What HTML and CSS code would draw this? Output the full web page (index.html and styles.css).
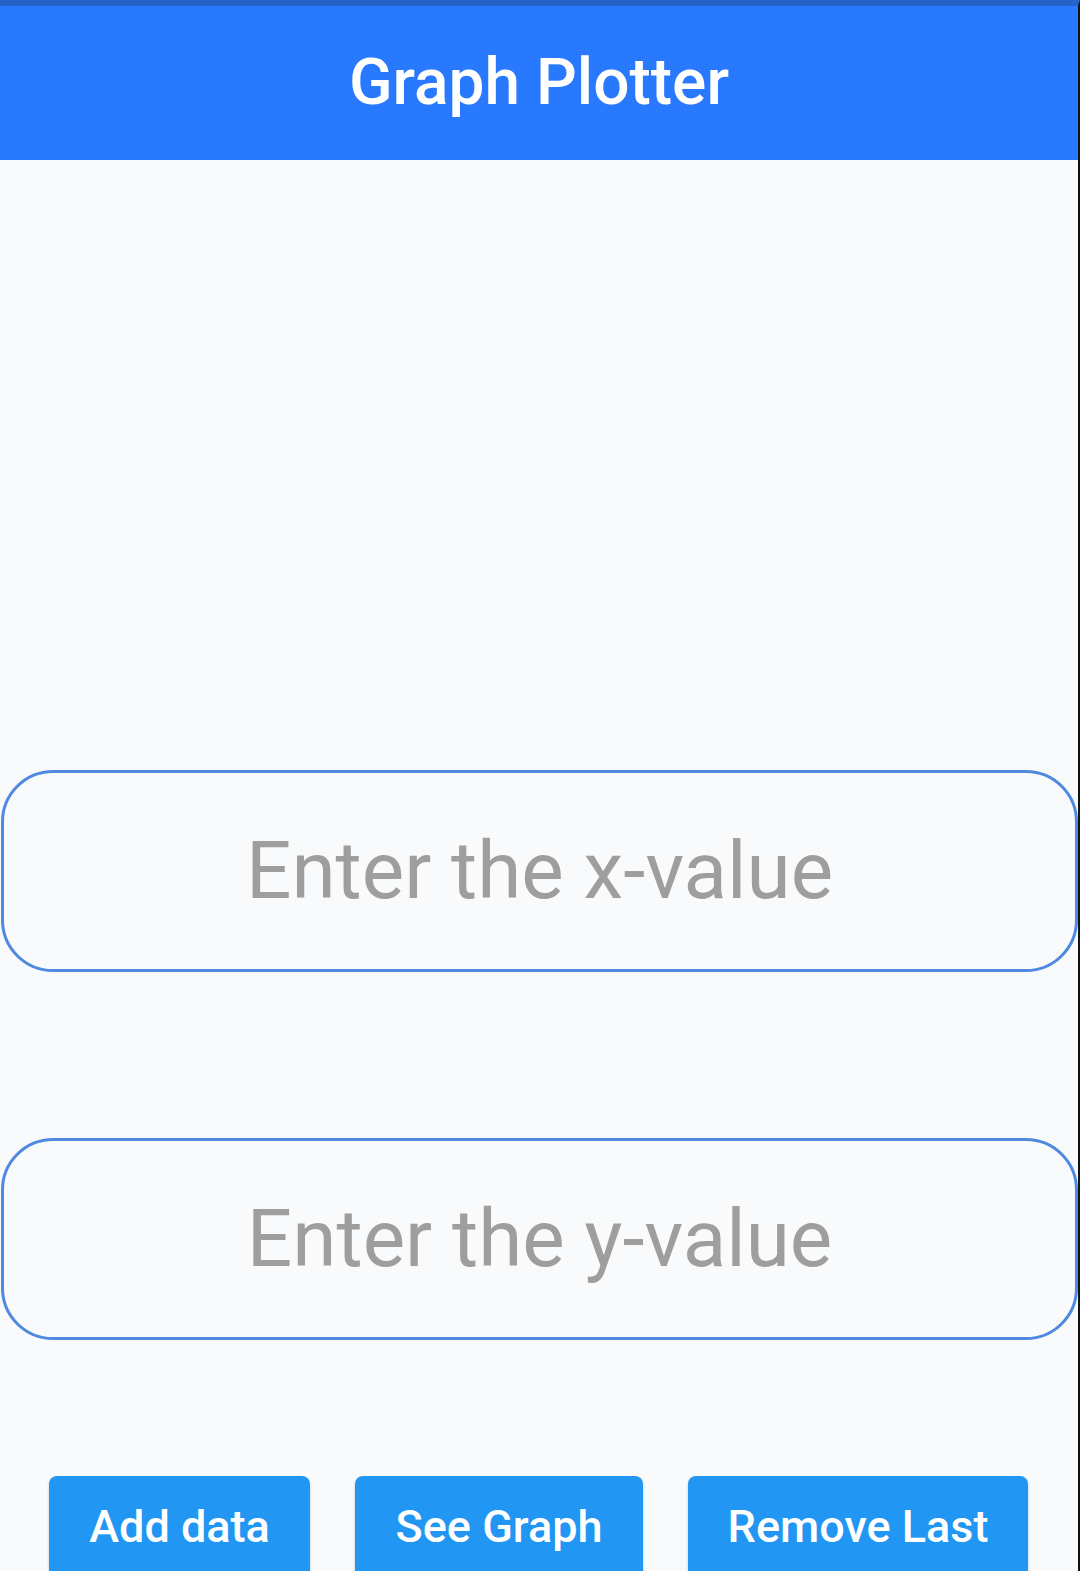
FILE: index.html
```html
<!DOCTYPE html>
<html>
<head>
<meta charset="utf-8">
<link rel="stylesheet" href="styles.css">
</head>
<body>
<div class="screen">
  <header class="appbar">Graph Plotter</header>
  <main class="content">
    <div class="field field-x"><span class="placeholder">Enter the x-value</span></div>
    <div class="field field-y"><span class="placeholder">Enter the y-value</span></div>
    <div class="actions">
      <button class="btn btn-add">Add data</button>
      <button class="btn btn-see">See Graph</button>
      <button class="btn btn-remove">Remove Last</button>
    </div>
  </main>
</div>
</body>
</html>
```

FILE: styles.css
```css
html, body {
  margin: 0;
  padding: 0;
  height: 100%;
  overflow: hidden;
}
body {
  background: #f9fafb;
  font-family: Roboto, "Liberation Sans", sans-serif;
}
.screen {
  height: 1571px;
  box-sizing: border-box;
  border-top: 6px solid #2562c9;
  border-right: 2px solid #101218;
  display: flex;
  flex-direction: column;
  background: #f9fafb;
}
.appbar {
  height: 154px;
  flex: none;
  background: #2979ff;
  color: #ffffff;
  font-weight: 500;
  font-size: 64px;
  display: flex;
  align-items: center;
  justify-content: center;
  padding-bottom: 2px;
  box-sizing: border-box;
}
.content {
  display: flex;
  flex-direction: column;
  padding-top: 610px;
}
.field {
  height: 202px;
  box-sizing: border-box;
  border: 3px solid #4f8ae0;
  border-radius: 52px;
  display: flex;
  align-items: center;
  justify-content: center;
  margin: 0 0 0 1px;
}
.field-y {
  margin-top: 166px;
}
.placeholder {
  color: #9e9e9e;
  font-size: 80px;
  font-weight: 400;
}
.actions {
  display: flex;
  gap: 45px;
  padding-left: 49px;
  margin-top: 136px;
}
.btn {
  height: 104px;
  border: none;
  border-radius: 8px;
  background: #2196f3;
  color: #ffffff;
  font-family: Roboto, "Liberation Sans", sans-serif;
  font-weight: 500;
  font-size: 45px;
  padding: 0 0 3px 0;
  white-space: nowrap;
  box-shadow: 0 2px 3px rgba(0,0,0,0.2);
}
.btn-add { width: 261px; }
.btn-see { width: 288px; }
.btn-remove { width: 340px; }
```
